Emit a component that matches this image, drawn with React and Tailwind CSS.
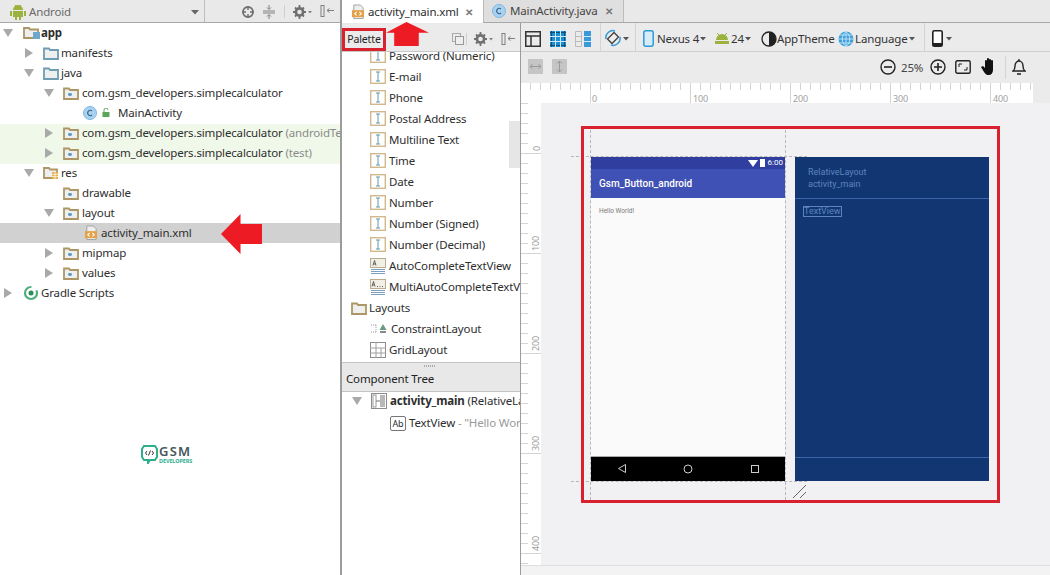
import React from "react";

const Folder = ({ dot, color = "#ad9566", fill = "#eef0f0" }) => (
  <svg width="16" height="14" viewBox="0 0 16 14" className="shrink-0">
    <path d="M1 2.500h5l1 1.500h8v9H1z" fill={fill} stroke={color} strokeWidth="1.800" />
    {dot && <rect x="5" y="7" width="4" height="3" rx="1.400" fill="#5b9bc0" />}
  </svg>
);
const Tri = ({ open }) => (
  <svg width="10" height="10" viewBox="0 0 10 10" className="shrink-0">
    {open ? <path d="M0 1h10L5 9z" fill="#a9a9a9" /> : <path d="M1 0l8 5-8 5z" fill="#a9a9a9" />}
  </svg>
);
const Xml = () => (
  <svg width="14" height="16" viewBox="0 0 15 16" className="shrink-0">
    <path d="M3 .500h7l3 3V15H3z" fill="#eee" stroke="#a0a0a0" />
    <rect x="1" y="6" width="13" height="7.500" fill="#e3a24a" />
    <path d="M6 8l-2 1.800L6 11.600M9 8l2 1.800-2 1.800" stroke="#fff" strokeWidth="1.100" fill="none" />
  </svg>
);
const ClassC = ({ s = 14 }) => (
  <svg width={s} height={s} viewBox="0 0 14 14" className="shrink-0">
    <circle cx="7" cy="7" r="6.500" fill="#a9d1f0" stroke="#7fb5e0" />
    <path d="M9 5a2.600 2.600 0 1 0 0 4" fill="none" stroke="#33658a" strokeWidth="1.100" />
  </svg>
);
const TextField = () => (
  <svg width="16" height="15" viewBox="0 0 16 15" className="shrink-0">
    <rect x=".700" y=".700" width="14.600" height="13.600" fill="#fff" stroke="#d2b88c" strokeWidth="1.400" />
    <path d="M6 3h4M6 12h4M8 3v9" stroke="#5c9aa8" strokeWidth="1" fill="none" />
  </svg>
);
const AutoField = ({ t }) => (
  <svg width="16" height="16" viewBox="0 0 16 16" className="shrink-0">
    <rect x=".500" y=".500" width="15" height="9" fill="#f2efe4" stroke="#b8ad90" />
    <path d={t === "A" ? "M3 7.500 4.500 2.500 6 7.500M3.500 6h2" : "M2 7.500 3.500 2.500 5 7.500M2.500 6h2M7 7.500h1M9.500 7.500h1M12 7.500h1"} fill="none" stroke="#444" strokeWidth=".8" />
    <path d="M1 11.500h14M1 13.500h14M1 15.500h14" stroke="#7b9fc0" />
  </svg>
);

const Row = ({ className = "", children }) => (
  <div className={"flex h-5 items-center whitespace-nowrap " + className}>{children}</div>
);
const PRow = ({ children, icon }) => (
  <div className="flex h-[21px] items-center gap-[3px] whitespace-nowrap pl-[28px]">
    {icon || <TextField />}
    <span>{children}</span>
  </div>
);

const Gear = () => (
  <svg width="20" height="14" viewBox="0 0 20 14">
    <circle cx="6.500" cy="7" r="3.600" fill="none" stroke="#707070" strokeWidth="2.600" />
    <path d="M6.500 0v3M6.500 11v3M0 7h3M10 7h3M2 2.500l2 2M9 9.500l2 2M11 2.500l-2 2M4 9.500l-2 2" stroke="#707070" strokeWidth="1.800" />
    <path d="M15 6h4l-2 2.400z" fill="#808080" />
  </svg>
);
const Pin = () => (
  <svg width="14" height="14" viewBox="0 0 14 14">
    <rect x="1" y="1.500" width="3" height="11" fill="none" stroke="#808080" />
    <path d="M7 6.500h7M7 6.500l2.500-2M7 6.500l2.500 2" stroke="#808080" fill="none" />
  </svg>
);
const Caret = () => (
  <svg width="6" height="4" viewBox="0 0 6 4" className="shrink-0"><path d="M0 0h6L3 3.500z" fill="#555" /></svg>
);

const Arrow = ({ d, className }) => (
  <svg viewBox="0 0 42 40" preserveAspectRatio="none" className={className}><path d={d} fill="#ed1c24" /></svg>
);

const topTicks = Array.from({ length: 52 }, (_, i) => i * 10);
const leftTicks = Array.from({ length: 47 }, (_, i) => i * 10);

export default function App() {
  return (
    <div className="relative h-[575px] w-[1050px] overflow-hidden bg-white text-[11.500px] leading-none tracking-[-0.15px] text-[#2e2e2e] [font-family:'Open_Sans','Noto_Sans',sans-serif]">
      {/* project panel */}
      <div className="absolute left-0 top-0 flex h-[23px] w-[340px] items-center border-b border-[#a8a8a8] bg-[#e9e9e9] pt-[1px]">
        <svg width="16" height="16" viewBox="0 0 16 16" className="ml-[10px]">
          <path d="M3 6a5 5 0 0 1 10 0zM3 7h10v6H3z" fill="#9bb33e" />
          <rect x="0" y="7" width="2" height="5" fill="#9bb33e" /><rect x="14" y="7" width="2" height="5" fill="#9bb33e" />
          <rect x="5" y="13" width="2" height="3" fill="#9bb33e" /><rect x="9" y="13" width="2" height="3" fill="#9bb33e" />
          <path d="M5 1l1.500 2M11 1L9.500 3" stroke="#9bb33e" />
        </svg>
        <span className="ml-[3px] text-[#6a6a6a]">Android</span>
        <svg width="8" height="5" viewBox="0 0 8 5" className="absolute left-[191px] top-[10px]"><path d="M0 0h8L4 4.500z" fill="#666" /></svg>
        <div className="absolute left-[204px] top-0 h-[22px] w-px bg-[#bdbdbd]" />
        <svg width="14" height="14" viewBox="0 0 14 14" className="absolute left-[241px] top-[5px]">
          <circle cx="7" cy="7" r="5" fill="none" stroke="#707070" strokeWidth="1.800" />
          <path d="M7 1v4M7 9v4M1 7h4M9 7h4" stroke="#707070" strokeWidth="1.400" />
        </svg>
        <svg width="14" height="14" viewBox="0 0 14 14" className="absolute left-[262px] top-[5px]">
          <path d="M1 6h12M1 8h12" stroke="#808080" />
          <path d="M7 0v4M5 2.500l2 2 2-2M7 14v-4M5 11.500l2-2 2 2" stroke="#808080" fill="none" />
        </svg>
        <div className="absolute left-[284px] top-[5px] h-[13px] w-px bg-[#cfcfcf]" />
        <div className="absolute left-[293px] top-[5px]"><Gear /></div>
        <div className="absolute left-[320px] top-[4px]"><Pin /></div>
      </div>
      <div className="absolute left-[340px] top-0 h-[575px] w-[2px] bg-[#9c9c9c]" />

      <div className="absolute left-0 top-[124px] h-[40px] w-[340px] bg-[#f0f8e9]" />
      <div className="absolute left-0 top-[223px] h-[20px] w-[340px] bg-[#d1d1d1]" />

      <div className="absolute left-0 top-[23px] w-[340px] overflow-hidden">
        <Row className="gap-[10px] pl-[3px]">
          <Tri open />
          <span className="flex items-center">
            <svg width="18" height="14" viewBox="0 0 18 14" className="shrink-0">
              <path d="M1 2h5l1 1.500h8V12H1z" fill="#eee" stroke="#ad9566" strokeWidth="1.800" />
              <rect x="10" y="6" width="7" height="7" fill="#6fa8cc" />
            </svg>
            <b className="font-bold">app</b>
          </span>
        </Row>
        <Row className="gap-[9px] pl-[24px]"><Tri /><span className="flex items-center gap-[2px]"><Folder color="#6f9cb5" /><span>manifests</span></span></Row>
        <Row className="gap-[9px] pl-[24px]"><Tri open /><span className="flex items-center gap-[2px]"><Folder color="#6f9cb5" /><span>java</span></span></Row>
        <Row className="gap-[9px] pl-[44px]"><Tri open /><span className="flex items-center gap-[3px]"><Folder dot /><span>com.gsm_developers.simplecalculator</span></span></Row>
        <Row className="gap-[4px] pl-[83px]"><ClassC /><svg width="10" height="10" viewBox="0 0 10 10" className="shrink-0"><rect x="1.500" y="4" width="7" height="5" fill="#5aa55a" /><path d="M3 4V2a2 2 0 0 1 4 0" stroke="#5aa55a" fill="none" /></svg><span className="ml-[3px]">MainActivity</span></Row>
        <Row className="gap-[9px] pl-[44px]"><Tri /><span className="flex items-center gap-[3px]"><Folder dot /><span>com.gsm_developers.simplecalculator <span className="text-[#8b8b8b]">(androidTest)</span></span></span></Row>
        <Row className="gap-[9px] pl-[44px]"><Tri /><span className="flex items-center gap-[3px]"><Folder dot /><span>com.gsm_developers.simplecalculator <span className="text-[#8b8b8b]">(test)</span></span></span></Row>
        <Row className="gap-[9px] pl-[24px]"><Tri open /><span className="flex items-center gap-[2px]">
          <svg width="16" height="14" viewBox="0 0 16 14" className="shrink-0">
            <path d="M1 2h5l1 1.500h7V12H1z" fill="#eee" stroke="#ad9566" strokeWidth="1.800" />
            <path d="M9 6h6v7H9z" fill="#e3b04b" /><path d="M9 8.300h6M9 10.600h6M12 6v7" stroke="#fff" strokeWidth=".7" />
          </svg><span>res</span></span></Row>
        <Row className="pl-[63px]"><span className="flex items-center gap-[3px]"><Folder dot /><span>drawable</span></span></Row>
        <Row className="gap-[9px] pl-[44px]"><Tri open /><span className="flex items-center gap-[3px]"><Folder dot /><span>layout</span></span></Row>
        <Row className="gap-[3px] pl-[84px]"><Xml /><span>activity_main.xml</span></Row>
        <Row className="gap-[9px] pl-[44px]"><Tri /><span className="flex items-center gap-[3px]"><Folder dot /><span>mipmap</span></span></Row>
        <Row className="gap-[9px] pl-[44px]"><Tri /><span className="flex items-center gap-[3px]"><Folder dot /><span>values</span></span></Row>
        <Row className="gap-[10px] pl-[3px]"><Tri />
          <span className="flex items-center gap-[2px]">
            <svg width="16" height="16" viewBox="0 0 16 16" className="shrink-0">
              <circle cx="8" cy="8" r="6" fill="none" stroke="#4cae7f" strokeWidth="2.200" strokeDasharray="28 6" />
              <circle cx="8" cy="8" r="2.500" fill="#2e8b57" />
            </svg><span>Gradle Scripts</span></span></Row>
      </div>

      <Arrow d="M0 20 20 0v10h22v20H20v10z" className="absolute left-[221px] top-[214px] h-[40px] w-[41px]" />

      {/* logo */}
      <div className="absolute left-[141px] top-[444px] flex items-center gap-[1px] tracking-normal">
        <svg width="17" height="20" viewBox="0 0 17 20">
          <path d="M3 2h11l2 3v8l-2 3H9l-2 3v-3H3l-2-3V5z" fill="#fff" stroke="#2fae8e" strokeWidth="2" />
          <path d="M6 7 4.500 9 6 11M11 7l1.500 2L11 11M9.500 6.500 7.500 11.500" stroke="#333" fill="none" />
        </svg>
        <div className="flex w-[33px] flex-col">
          <span className="text-[13px] font-semibold leading-[14px] tracking-[1.200px] text-[#46565c]">GSM</span>
          <span className="text-[5.500px] font-bold leading-[6px] tracking-[-0.1px] text-[#2fae8e]">DEVELOPERS</span>
        </div>
      </div>

      {/* tab bar */}
      <div className="absolute left-[342px] top-0 h-[23px] w-[708px] border-b border-[#a8a8a8] bg-[#e9e9e9]" />
      <div className="absolute left-[342px] top-0 flex h-[23px] w-[141px] items-center bg-white pl-[9px]">
        <Xml /><span className="ml-[3px]">activity_main.xml</span>
        <span className="ml-[6px] text-[10px] font-bold text-[#777]">✕</span>
      </div>
      <div className="absolute left-[483px] top-0 flex h-[22px] w-[141px] items-center border-x border-[#bcbcbc] bg-[#dfdfdf] pl-[8px] text-[#444]">
        <ClassC /><span className="ml-[4px]">MainActivity.java</span>
        <span className="ml-[7px] text-[10px] font-bold text-[#777]">✕</span>
      </div>

      {/* palette header */}
      <div className="absolute left-[342px] top-[23px] h-[29px] w-[178px] border-b border-[#c8c8c8] bg-[#ebebeb]" />
      <div className="absolute left-[342px] top-[28px] flex h-[23px] w-[44px] items-center justify-center border-[3px] border-[#d8232f] text-[10.500px] text-[#222]">Palette</div>
      <Arrow d="M20 0 42 18H32v22H8V18H0z" className="absolute left-[386px] top-[22px] h-[24px] w-[43px]" />
      <svg width="12" height="12" viewBox="0 0 12 12" className="absolute left-[452px] top-[33px]"><rect x=".500" y=".500" width="8" height="8" fill="none" stroke="#aaa" /><rect x="3.500" y="3.500" width="8" height="8" fill="#eee" stroke="#999" /></svg>
      <div className="absolute left-[466px] top-[33px] h-[12px] w-px bg-[#cfcfcf]" />
      <div className="absolute left-[474px] top-[32px]"><Gear /></div>
      <div className="absolute left-[501px] top-[32px]"><Pin /></div>

      {/* palette list */}
      <div className="absolute left-[342px] top-[52px] h-[310px] w-[178px] overflow-hidden bg-white">
        <div className="absolute left-0 top-[-7px] w-full">
          <PRow>Password (Numeric)</PRow>
          <PRow>E-mail</PRow>
          <PRow>Phone</PRow>
          <PRow>Postal Address</PRow>
          <PRow>Multiline Text</PRow>
          <PRow>Time</PRow>
          <PRow>Date</PRow>
          <PRow>Number</PRow>
          <PRow>Number (Signed)</PRow>
          <PRow>Number (Decimal)</PRow>
          <PRow icon={<AutoField t="A" />}>AutoCompleteTextView</PRow>
          <PRow icon={<AutoField t="A..." />}>MultiAutoCompleteTextView</PRow>
          <div className="flex h-[21px] items-center gap-[2px] whitespace-nowrap pl-[9px]">
            <Folder />
            <span>Layouts</span>
          </div>
          <PRow icon={
            <svg width="18" height="12" viewBox="0 0 18 12" className="shrink-0">
              <path d="M1 2h3M1 9h3M6 2v7M6 2H4M6 9H4" stroke="#999" fill="none" strokeDasharray="1 1" />
              <path d="M13 1l3.500 6h-7z" fill="#6a9b7e" /><rect x="10" y="8" width="6" height="2" fill="#8a8a8a" />
            </svg>}>ConstraintLayout</PRow>
          <PRow icon={
            <svg width="16" height="16" viewBox="0 0 16 16" className="shrink-0">
              <rect x=".500" y=".500" width="15" height="15" fill="#fff" stroke="#8c8c8c" />
              <path d="M0 6h16M0 11h16M6 0v16M11 6v10" stroke="#a0a0a0" />
            </svg>}>GridLayout</PRow>
        </div>
        <div className="absolute left-[167px] top-[69px] h-[47px] w-[11px] bg-[#e6e6e6]" />
      </div>

      {/* component tree */}
      <div className="absolute left-[342px] top-[362px] flex h-[30px] w-[178px] items-center border-y border-[#c4c4c4] bg-[#e8e8e8] pl-[4px] pt-[3px] text-[#222]">Component Tree</div>
      <div className="absolute left-[424px] top-[365px] h-[2px] w-[12px] bg-[repeating-linear-gradient(90deg,#aaa_0_1px,transparent_1px_2px)]" />
      <div className="absolute left-[342px] top-[392px] h-[183px] w-[178px] overflow-hidden bg-white">
        <div className="absolute left-[10px] top-0 flex h-[18px] items-center gap-[9px] whitespace-nowrap">
          <Tri open />
          <svg width="16" height="16" viewBox="0 0 16 16" className="shrink-0">
            <rect x=".500" y=".500" width="15" height="15" fill="#fff" stroke="#8c8c8c" />
            <rect x="9" y="2" width="5" height="12" fill="#b8b8b8" /><rect x="2" y="2" width="3" height="12" fill="none" stroke="#999" />
            <path d="M5 8h4" stroke="#777" />
          </svg>
          <span className="-ml-[6px]"><b className="font-bold">activity_main</b> (RelativeLayout)</span>
        </div>
        <div className="absolute left-[48px] top-[22px] flex h-[18px] items-center gap-[3px] whitespace-nowrap">
          <span className="flex h-[15px] w-[16px] items-center justify-center rounded-[2px] border border-[#777] text-[9px]">Ab</span>
          <span>TextView <span className="text-[#9a9a9a]">- "Hello World!"</span></span>
        </div>
      </div>

      {/* divider */}
      <div className="absolute left-[520px] top-[23px] h-[552px] w-[1px] bg-[#9c9c9c]" />

      {/* design toolbar */}
      <div className="absolute left-[521px] top-[23px] flex h-[29px] w-[529px] items-center border-b border-[#cfcfcf] bg-[#ebebeb] text-[#333]">
        <svg width="16" height="16" viewBox="0 0 16 16" className="absolute left-[4px] top-[8px]"><path d="M.750.750h14.500v14.500H.750zM.750 5h14.500M6 5v10.250" fill="none" stroke="#333" strokeWidth="1.500" /></svg>
        <svg width="16" height="16" viewBox="0 0 16 16" className="absolute left-[29px] top-[8px]"><rect width="16" height="16" fill="#1d8fd1" /><path d="M0 1.500h16M0 14.500h16M1.500 0v16M14.500 0v16" stroke="#0f4f78" /><path d="M5.500 0v16M10.500 0v16M0 5.500h16M0 10.500h16" stroke="#cfe9f8" /></svg>
        <svg width="16" height="16" viewBox="0 0 16 16" className="absolute left-[54px] top-[8px]"><path d="M.500.500h6v15h-6zM0 5.500h6M0 10.500h6" fill="none" stroke="#bbb" /><rect x="9" y="0" width="7" height="16" fill="#3a9ad9" /><path d="M9 5.500h7M9 10.500h7" stroke="#cfe9f8" /></svg>
        <div className="absolute left-[79px] top-[0px] h-[28px] w-px bg-[#d4d4d4]" />
        <svg width="18" height="18" viewBox="0 0 18 18" className="absolute left-[83px] top-[6px]"><path d="M2 10a7 7 0 0 1 9-8M16 8a7 7 0 0 1-9 8" fill="none" stroke="#2f9bd6" strokeWidth="1.500" /><path d="M3.500 10 10 3.500l4.500 4.500L8 14.500z" fill="#eee" stroke="#444" strokeWidth="1.400" /></svg>
        <svg width="6" height="4" viewBox="0 0 6 4" className="absolute left-[102px] top-[14px]"><path d="M0 0h6L3 3.500z" fill="#555" /></svg>
        <div className="absolute left-[114px] top-0 h-[28px] w-px bg-[#d4d4d4]" />
        <svg width="11" height="17" viewBox="0 0 11 17" className="absolute left-[122px] top-[7px]"><rect x=".800" y=".800" width="9.400" height="15.400" rx="2" fill="#d6ecf8" stroke="#2f9bd6" strokeWidth="1.500" /></svg>
        <span className="absolute left-[136px] top-[10px] flex items-center gap-[1px]">Nexus 4<Caret /></span>
        <svg width="16" height="11" viewBox="0 0 16 11" className="absolute left-[193px] top-[10px]"><path d="M2 7a6 6 0 0 1 12 0zM1 8h14v3H1z" fill="#9bb33e" /><path d="M3 0l2 2M13 0l-2 2" stroke="#9bb33e" /></svg>
        <span className="absolute left-[210px] top-[10px] flex items-center gap-[1px]">24<Caret /></span>
        <svg width="16" height="16" viewBox="0 0 16 16" className="absolute left-[240px] top-[8px]"><circle cx="8" cy="8" r="7" fill="none" stroke="#222" strokeWidth="1.300" /><path d="M8 1a7 7 0 0 1 0 14z" fill="#222" /></svg>
        <span className="absolute left-[256px] top-[10px]">AppTheme</span>
        <svg width="16" height="16" viewBox="0 0 16 16" className="absolute left-[317px] top-[8px]"><circle cx="8" cy="8" r="7.500" fill="#3ba0dc" /><path d="M.500 8h15M8 .500v15M2 4h12M2 12h12M8 .500c-5 4-5 11 0 15M8 .500c5 4 5 11 0 15" stroke="#d8eefa" fill="none" strokeWidth=".8" /></svg>
        <span className="absolute left-[334px] top-[10px] flex items-center gap-[1px]">Language<Caret /></span>
        <div className="absolute left-[403px] top-0 h-[28px] w-px bg-[#d4d4d4]" />
        <svg width="11" height="17" viewBox="0 0 11 17" className="absolute left-[411px] top-[7px]"><rect x=".800" y=".800" width="9.400" height="15.400" rx="1.500" fill="#fff" stroke="#222" strokeWidth="1.600" /><rect x=".800" y="13" width="9.400" height="3" fill="#222" /></svg>
        <svg width="6" height="4" viewBox="0 0 6 4" className="absolute left-[425px] top-[14px]"><path d="M0 0h6L3 3.500z" fill="#555" /></svg>
      </div>

      {/* second toolbar */}
      <div className="absolute left-[521px] top-[52px] h-[31px] w-[529px] bg-[#ebebeb]">
        <span className="absolute left-[7px] top-[7px] flex h-[15px] w-[15px] items-center justify-center bg-[#c5c5c5]"><svg width="11" height="7" viewBox="0 0 11 7"><path d="M0 3.500h11M2.500 1 0 3.500 2.500 6M8.500 1 11 3.500 8.500 6" stroke="#999" fill="none" /></svg></span>
        <span className="absolute left-[31px] top-[7px] flex h-[15px] w-[15px] items-center justify-center bg-[#c5c5c5]"><svg width="7" height="11" viewBox="0 0 7 11"><path d="M3.500 0v11M1 2.500 3.500 0 6 2.500M1 8.500 3.500 11 6 8.500" stroke="#999" fill="none" /></svg></span>
        <svg width="16" height="16" viewBox="0 0 16 16" className="absolute left-[359px] top-[7px]"><circle cx="8" cy="8" r="7" fill="none" stroke="#222" strokeWidth="1.400" /><path d="M4 8h8" stroke="#222" strokeWidth="1.600" /></svg>
        <span className="absolute left-[380px] top-[10px] text-[#444]">25%</span>
        <svg width="16" height="16" viewBox="0 0 16 16" className="absolute left-[409px] top-[7px]"><circle cx="8" cy="8" r="7" fill="none" stroke="#222" strokeWidth="1.400" /><path d="M4 8h8M8 4v8" stroke="#222" strokeWidth="1.600" /></svg>
        <svg width="16" height="14" viewBox="0 0 16 14" className="absolute left-[434px] top-[8px]"><rect x=".800" y=".800" width="14.400" height="12.400" rx="1.500" fill="none" stroke="#222" strokeWidth="1.400" /><path d="M4 7V4h3M12 7v3H9" stroke="#222" fill="none" /></svg>
        <svg width="16" height="17" viewBox="0 0 16 17" className="absolute left-[460px] top-[6px]"><path d="M0 9l2-1 2 2V3a1 1 0 0 1 2 0V1a1 1 0 0 1 2 0v1a1 1 0 0 1 2 0v1a1 1 0 0 1 2 0v9c0 3-2 5-4 5H7c-2 0-3-2-4-3z" fill="#111" /></svg>
        <div className="absolute left-[484px] top-[4px] h-[23px] w-px bg-[#d4d4d4]" />
        <svg width="14" height="16" viewBox="0 0 14 16" className="absolute left-[491px] top-[7px]"><path d="M1 12c1.500-1 2-2 2-5s2-5 4-5 4 2 4 5 .5 4 2 5z" fill="none" stroke="#222" strokeWidth="1.400" /><path d="M5 15h4M7 0v2" stroke="#222" strokeWidth="1.300" /></svg>
      </div>

      {/* canvas */}
      <div className="absolute left-[521px] top-[83px] h-[482px] w-[529px] bg-[#f1f1f3]" />
      <div className="absolute left-[521px] top-[565px] h-[10px] w-[529px] border-t border-[#dedede] bg-[#f3f3f3]" />
      <div className="absolute left-[1033px] top-[83px] h-[20px] w-[17px] bg-[#ebebeb]" />
      {/* rulers */}
      <svg width="512" height="20" viewBox="0 0 512 20" className="absolute left-[521px] top-[83px]">
        <rect width="512" height="20" fill="#fff" />
        {topTicks.map((x) => {
          const major = x % 100 === 70;
          return <line key={x} x1={x - 1 + 0.5} x2={x - 1 + 0.5} y1="0" y2={major ? 20 : 7} stroke="#d4d4d4" />;
        })}
      </svg>
      <svg width="20" height="462" viewBox="0 0 20 462" className="absolute left-[521px] top-[103px]">
        <rect width="20" height="462" fill="#fff" />
        {leftTicks.map((y) => {
          const major = y % 100 === 50;
          return <line key={y} y1={y + 0.5} y2={y + 0.5} x1="0" x2={major ? 20 : 7} stroke="#d4d4d4" />;
        })}
      </svg>
      <span className="absolute left-[592px] top-[94px] text-[9px] text-[#a0a0a0]">0</span>
      <span className="absolute left-[693px] top-[94px] text-[9px] text-[#a0a0a0]">100</span>
      <span className="absolute left-[793px] top-[94px] text-[9px] text-[#a0a0a0]">200</span>
      <span className="absolute left-[893px] top-[94px] text-[9px] text-[#a0a0a0]">300</span>
      <span className="absolute left-[993px] top-[94px] text-[9px] text-[#a0a0a0]">400</span>
      <span className="absolute left-[534px] top-[144px] -rotate-90 text-[9px] text-[#a0a0a0]">0</span>
      <span className="absolute left-[528px] top-[239px] -rotate-90 text-[9px] text-[#a0a0a0]">100</span>
      <span className="absolute left-[528px] top-[339px] -rotate-90 text-[9px] text-[#a0a0a0]">200</span>
      <span className="absolute left-[528px] top-[439px] -rotate-90 text-[9px] text-[#a0a0a0]">300</span>
      <span className="absolute left-[528px] top-[539px] -rotate-90 text-[9px] text-[#a0a0a0]">400</span>

      {/* phone */}
      <div className="absolute left-[591px] top-[157px] h-[324px] w-[194px] bg-[#fafafa] tracking-normal">
        <div className="flex h-[12px] items-center justify-end gap-[2px] bg-[#303f9f] pr-[2px] text-[8px] text-white [font-family:Roboto,sans-serif]">
          <svg width="10" height="7" viewBox="0 0 10 7"><path d="M0 0h10L5 7z" fill="#fff" /></svg>
          <span className="h-[8px] w-[5px] bg-white" />
          <span className="ml-[1px]">6:00</span>
        </div>
        <div className="flex h-[29px] items-center bg-[#3f51b5] pl-[8px] text-[10px] font-medium text-white [font-family:Roboto,sans-serif]">Gsm_Button_android</div>
        <div className="pl-[8px] pt-[10px] text-[6.500px] text-[#777] [font-family:Roboto,sans-serif]">Hello World!</div>
        <div className="absolute bottom-0 left-0 h-[25px] w-full border-t border-[#aaa] bg-black">
          <svg width="194" height="24" viewBox="0 0 194 24">
            <path d="M34.500 7.500v8l-7-4z" fill="none" stroke="#ccc" />
            <circle cx="97" cy="12" r="4" fill="none" stroke="#ccc" />
            <rect x="160.500" y="8.500" width="7" height="7" fill="none" stroke="#ccc" />
          </svg>
        </div>
      </div>

      {/* blueprint */}
      <div className="absolute left-[795px] top-[157px] h-[324px] w-[194px] bg-[#123672] tracking-normal">
        <div className="absolute left-[13px] top-[9px] text-[9px] leading-[12px] text-[#5f83bd] [font-family:Roboto,sans-serif]">RelativeLayout<br />activity_main</div>
        <div className="absolute left-0 top-[41px] h-px w-full bg-[#3c64a8]" />
        <div className="absolute left-[8px] top-[49px] border border-[#5f83bd] text-[9px] leading-[9px] text-[#5f83bd] [font-family:Roboto,sans-serif]">TextView</div>
        <div className="absolute left-0 top-[300px] h-px w-full bg-[#3c64a8]" />
      </div>

      {/* guides */}
      <div className="absolute left-[590px] top-[130px] h-[370px] border-l border-dashed border-[#b8b8b8]" />
      <div className="absolute left-[785px] top-[130px] h-[370px] border-l border-dashed border-[#b8b8b8]" />
      <div className="absolute left-[571px] top-[156px] w-[236px] border-t border-dashed border-[#b8b8b8]" />
      <div className="absolute left-[571px] top-[481px] w-[236px] border-t border-dashed border-[#b8b8b8]" />
      <svg width="16" height="16" viewBox="0 0 16 16" className="absolute left-[792px] top-[484px]">
        <path d="M1 14 14 1M8 14l6-6" stroke="#666" />
      </svg>

      {/* red frame */}
      <div className="absolute left-[581px] top-[126px] h-[377px] w-[419px] border-[3px] border-[#d8232f]" />
    </div>
  );
}
